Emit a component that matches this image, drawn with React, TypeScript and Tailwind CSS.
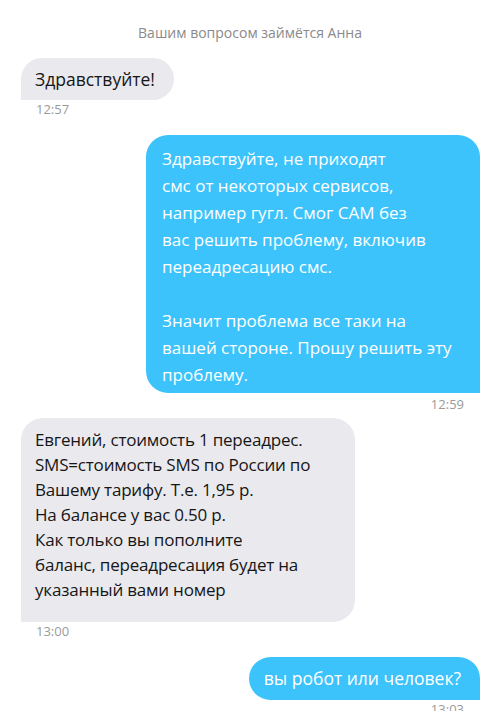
import React from "react";

const font = { fontFamily: '"Open Sans", "Noto Sans", sans-serif' };

function Lines({ lines }: { lines: string[] }) {
  return (
    <>
      {lines.map((l, i) => (
        <div key={i} className="whitespace-nowrap">
          {l === "" ? "\u00a0" : l}
        </div>
      ))}
    </>
  );
}

export default function App() {
  return (
    <div className="w-[500px] h-[711px] overflow-hidden bg-white" style={font}>
      <div className="pt-[23px] text-center text-[14px] leading-[20px] text-[#8a8a8a]">
        Вашим вопросом займётся Анна
      </div>

      {/* incoming 1 */}
      <div className="mt-[15px] pl-[21px]">
        <div className="inline-block rounded-[21px] rounded-bl-none bg-[#e9e9ee] pl-[14px] pr-[19px] py-[8px] text-[17.5px] leading-[26px] text-[#161616]">
          Здравствуйте!
        </div>
        <div className="pl-[15px] text-[13px] leading-[18px] text-[#9a9a9a]">12:57</div>
      </div>

      {/* outgoing 1 */}
      <div className="mt-[17px] flex flex-col items-end pr-[20px]">
        <div className="w-[334px] rounded-[22px] rounded-br-none bg-[#3cc3fb] pl-[16px] pr-[10px] pt-[10px] pb-[5px] text-[17px] leading-[27px] text-white">
          <Lines
            lines={[
              "Здравствуйте, не приходят",
              "смс от некоторых сервисов,",
              "например гугл. Смог САМ без",
              "вас решить проблему, включив",
              "переадресацию смс.",
              "",
              "Значит проблема все таки на",
              "вашей стороне. Прошу решить эту",
              "проблему.",
            ]}
          />
        </div>
        <div className="pr-[16px] pt-[2px] text-[13px] leading-[18px] text-[#9a9a9a]">12:59</div>
      </div>

      {/* incoming 2 */}
      <div className="mt-[5px] pl-[21px]">
        <div className="w-[334px] rounded-[22px] rounded-bl-none bg-[#e9e9ee] pl-[14px] pr-[10px] pt-[9px] pb-[20px] text-[17px] leading-[25px] tracking-[-0.2px] text-[#161616]">
          <Lines
            lines={[
              "Евгений, стоимость 1 переадрес.",
              "SMS=стоимость SMS по России по",
              "Вашему тарифу. Т.е. 1,95 р.",
              "На балансе у вас 0.50 р.",
              "Как только вы пополните",
              "баланс, переадресация будет на",
              "указанный вами номер",
            ]}
          />
        </div>
        <div className="pl-[15px] text-[13px] leading-[18px] text-[#9a9a9a]">13:00</div>
      </div>

      {/* outgoing 2 */}
      <div className="mt-[17px] flex flex-col items-end pr-[20px]">
        <div className="inline-block rounded-[22px] rounded-br-none bg-[#3cc3fb] pl-[15px] pr-[19px] pt-[8px] pb-[9px] text-[17.5px] leading-[26px] text-white">
          вы робот или человек?
        </div>
        <div className="pr-[16px] text-[13px] leading-[18px] text-[#9a9a9a]">13:03</div>
      </div>
    </div>
  );
}
